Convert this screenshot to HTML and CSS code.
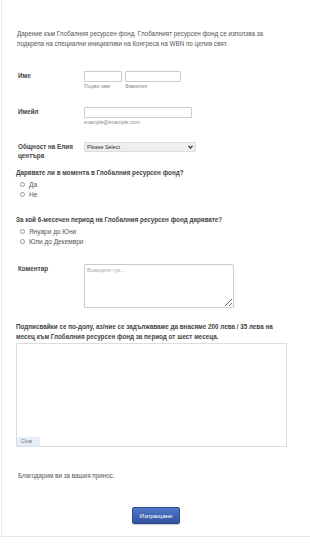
FILE: index.html
```html
<!DOCTYPE html>
<html>
<head>
<title>Глобален ресурсен фонд</title>
<link rel="stylesheet" href="styles.css">
</head>
<body>

<div class="formAll">

<div class="intro">
Дарение към Глобалния ресурсен фонд. Глобалният ресурсен фонд се използва за<br>
подкрепа на специални инициативи на Конгреса на WBN по целия свят.
</div>

<div class="line nameLine">
<label class="fieldLabel">Име</label>
<div class="fieldInput">
<span class="subField">
<input type="text" class="textInput first">
<span class="subLabel">Първо име</span>
</span>
<span class="subField">
<input type="text" class="textInput last">
<span class="subLabel">Фамилия</span>
</span>
</div>
</div>

<div class="line emailLine">
<label class="fieldLabel">Имейл</label>
<div class="fieldInput">
<span class="subField">
<input type="text" class="textInput email">
<span class="subLabel">example@example.com</span>
</span>
</div>
</div>

<div class="line selectLine">
<label class="fieldLabel">Общност на Елия центъра</label>
<div class="fieldInput">
<div class="selectBox">
<span>Please Select</span>
<svg class="chevron" width="5" height="4" viewBox="0 0 5 4">
<path d="M0.5 0.8 L2.5 3 L4.5 0.8" fill="none" stroke="#333" stroke-width="1.2"/>
</svg>
</div>
</div>
</div>

<div class="question q1">
<div class="questionLabel">Дарявате ли в момента в Глобалния ресурсен фонд?</div>
<div class="radioItem"><span class="radio"></span>Да</div>
<div class="radioItem"><span class="radio"></span>Не</div>
</div>

<div class="question q2">
<div class="questionLabel">За кой 6-месечен период на Глобалния ресурсен фонд дарявате?</div>
<div class="radioItem"><span class="radio"></span>Януари до Юни</div>
<div class="radioItem"><span class="radio"></span>Юли до Декември</div>
</div>

<div class="line commentLine">
<label class="fieldLabel">Коментар</label>
<div class="fieldInput">
<textarea class="comment" placeholder="Въведете тук..."></textarea>
</div>
</div>

<div class="signature">
<div class="questionLabel sigLabel">Подписвайки се по-долу, аз/ние се задължаваме да внасяме 200 лева / 35 лева на<br>
месец към Глобалния ресурсен фонд за период от шест месеца.</div>
<div class="sigPad">
<span class="clearBtn">Clear</span>
</div>
</div>

<div class="thanks">Благодарим ви за вашия принос.</div>

<div class="submitRow">
<button class="submitBtn">Изпращане</button>
</div>

</div>

</body>
</html>
```

FILE: styles.css
```css
body {
    margin: 0;
    background: #fff;
    font-family: "Liberation Sans", Arial, sans-serif;
    color: #555;
}
.formAll {
    margin-left: 1px;
    width: 309px;
    height: 537px;
    box-sizing: border-box;
    border-left: 1px solid #ececec;
    border-bottom: 1px solid #e6e6e6;
    padding: 29px 14px 0 14px;
    font-size: 6.3px;
}
.intro {
    line-height: 10px;
    padding-left: 1px;
    white-space: nowrap;
}
.line {
    display: flex;
}
.fieldLabel {
    width: 68px;
    padding-left: 2px;
    font-weight: bold;
    font-size: 6.3px;
    color: #444;
    line-height: 9px;
    box-sizing: border-box;
}
.fieldInput {
    display: flex;
    gap: 3px;
}
.subField {
    display: flex;
    flex-direction: column;
}
.textInput {
    margin: 0;
    padding: 0;
    height: 11px;
    box-sizing: border-box;
    border: 1px solid #ccc;
    border-radius: 1px;
    background: #fff;
}
.textInput.first {
    width: 38px;
}
.textInput.last {
    width: 56px;
}
.textInput.email {
    width: 108px;
}
.subLabel {
    font-size: 5.2px;
    color: #888;
    line-height: 6px;
    margin-top: 1px;
}
.nameLine {
    margin-top: 22px;
}
.emailLine {
    margin-top: 18px;
}
.selectLine {
    margin-top: 17px;
}
.selectBox {
    width: 112px;
    height: 10px;
    box-sizing: border-box;
    border: 1px solid #ddd;
    background: #eee;
    display: flex;
    align-items: center;
    justify-content: space-between;
    padding: 0 2px;
    font-size: 5.4px;
    color: #333;
}
.chevron {
    display: block;
}
.q1 {
    margin-top: 8px;
}
.q2 {
    margin-top: 16px;
}
.questionLabel {
    font-weight: bold;
    font-size: 6.3px;
    color: #444;
    line-height: 10px;
}
.radioItem {
    display: flex;
    align-items: center;
    height: 10px;
    padding-left: 4px;
    font-size: 6.5px;
}
.radio {
    width: 5px;
    height: 5px;
    border: 1px solid #999;
    border-radius: 50%;
    margin-right: 4px;
    box-sizing: border-box;
    display: inline-block;
}
.questionLabel + .radioItem {
    margin-top: 1px;
}
.commentLine {
    margin-top: 18px;
}
.comment {
    margin: 0;
    width: 150px;
    height: 44px;
    box-sizing: border-box;
    border: 1px solid #ccc;
    border-radius: 1px;
    padding: 2px;
    font-family: "Liberation Sans", Arial, sans-serif;
    font-size: 5.4px;
    color: #555;
}
.comment::placeholder {
    color: #aaa;
}
.signature {
    margin-top: 14px;
}
.sigLabel {
    font-size: 6.3px;
    white-space: nowrap;
}
.sigPad {
    margin-top: 1px;
    width: 271px;
    height: 104px;
    box-sizing: border-box;
    border: 1px solid #ddd;
    display: flex;
    align-items: flex-end;
}
.clearBtn {
    display: inline-block;
    width: 23px;
    height: 9px;
    line-height: 9px;
    background: #e5edf9;
    color: #777;
    font-size: 4.8px;
    padding-left: 4px;
    box-sizing: border-box;
}
.thanks {
    margin-top: 24px;
    padding-left: 2px;
    line-height: 10px;
}
.submitRow {
    margin-top: 26px;
    text-align: center;
}
.submitBtn {
    width: 48px;
    height: 17px;
    padding: 0;
    border: 1px solid #2b4a8f;
    border-radius: 2px;
    background: linear-gradient(#5277c9, #30549f);
    color: #fff;
    font-family: "Liberation Sans", Arial, sans-serif;
    font-size: 6.2px;
    box-shadow: 0 1px 1px rgba(0, 0, 0, 0.2);
}
```
